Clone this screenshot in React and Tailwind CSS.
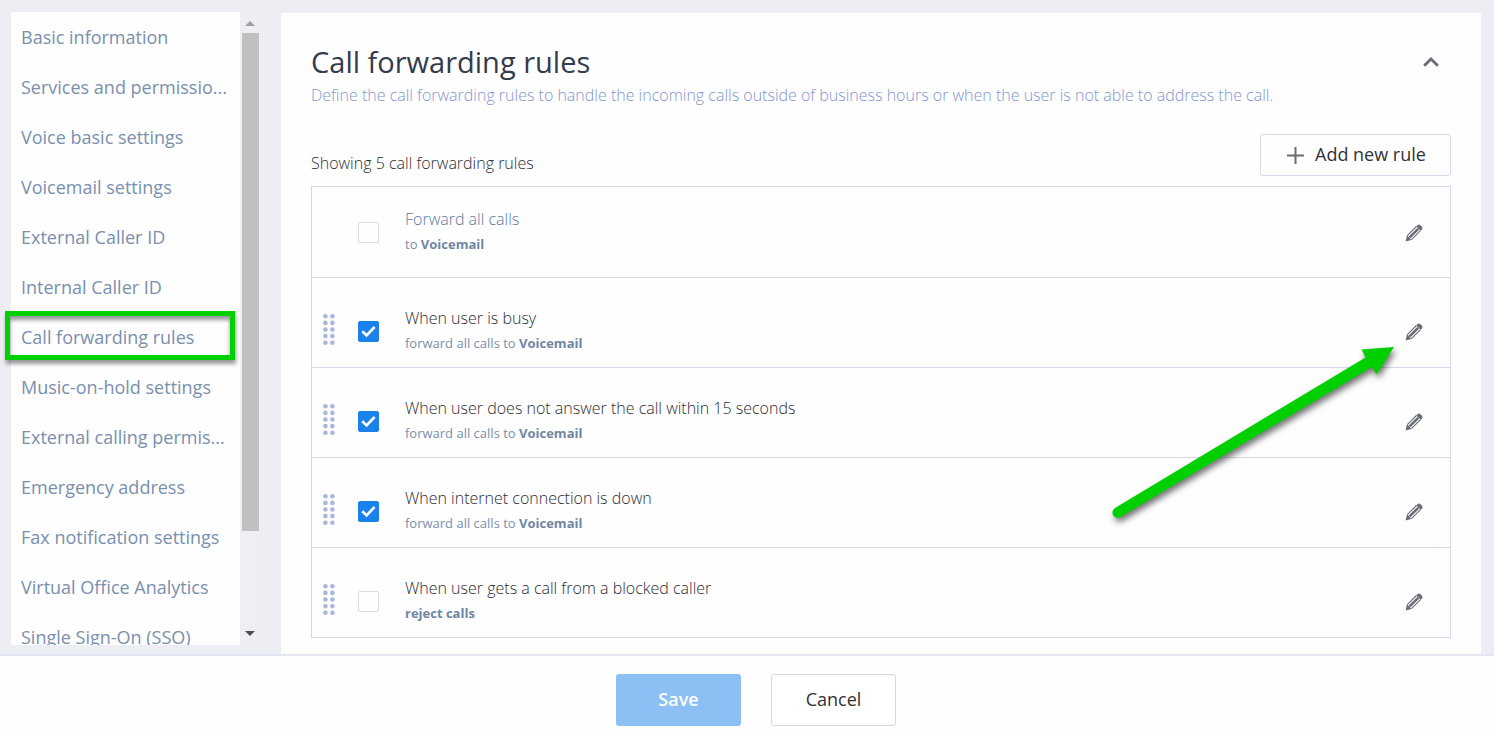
const sections = [
  "Basic information",
  "Services and permissio...",
  "Voice basic settings",
  "Voicemail settings",
  "External Caller ID",
  "Internal Caller ID",
  "Call forwarding rules",
  "Music-on-hold settings",
  "External calling permis...",
  "Emergency address",
  "Fax notification settings",
  "Virtual Office Analytics",
  "Single Sign-On (SSO)",
];

const rules = [
  { id: "all", title: "Forward all calls", action: "to ", target: "Voicemail", enabled: false, fixed: true },
  { id: "busy", title: "When user is busy", action: "forward all calls to ", target: "Voicemail", enabled: true },
  { id: "no-answer", title: "When user does not answer the call within 15 seconds", action: "forward all calls to ", target: "Voicemail", enabled: true },
  { id: "offline", title: "When internet connection is down", action: "forward all calls to ", target: "Voicemail", enabled: true },
  { id: "blocked", title: "When user gets a call from a blocked caller", action: "", target: "reject calls", enabled: false },
];

function PencilIcon() {
  return (
    <svg viewBox="0 0 18 18" className="size-[18px]" fill="none" stroke="#6a6d77" aria-hidden="true">
      <path d="M2.3 11.6 11.4 2.5M6.4 15.7 15.5 6.6" strokeWidth="1.1" />
      <path d="M4.6 13.4 13.2 4.8" strokeWidth="2.6" />
      <path d="M11.2 2.4 12.6 1Q14 0 15.2 1L17 2.8Q18 4 17 5.4L15.6 6.8Z" fill="#6a6d77" stroke="none" />
      <path d="M1.9 11.6 .6 17.4 6.4 16.1 5.4 14.7 4.4 13.6 3.3 12.6Z" fill="#6a6d77" stroke="none" />
    </svg>
  );
}

function DragHandle() {
  return (
    <svg viewBox="0 0 12 31" className="h-[31px] w-3" fill="#a9b7de" aria-hidden="true">
      {[2.3, 8.9, 15.5, 22.1, 28.7].map((y) => (
        <g key={y}>
          <circle cx="2.4" cy={y} r="2.3" />
          <circle cx="9.4" cy={y} r="2.3" />
        </g>
      ))}
    </svg>
  );
}

function Rule({ rule }) {
  return (
    <li
      className={`flex items-center border-b border-[#d3d9ea] last:h-[89px] last:border-b-0 ${rule.fixed ? "h-[91px] pt-px" : "h-[90px] pt-[18px]"}`}
    >
      <div className="flex w-[46px] shrink-0 pl-[11px]">
        {!rule.fixed && (
          <button type="button" aria-label={`Reorder ${rule.title}`} className="-mt-1 cursor-grab">
            <DragHandle />
          </button>
        )}
      </div>
      <div className="grid shrink-0">
        <input
          id={rule.id}
          type="checkbox"
          defaultChecked={rule.enabled}
          className="peer col-start-1 row-start-1 size-[21px] appearance-none rounded-xs border border-[#d5daec] bg-white checked:border-[#1a82ea] checked:bg-[#1a82ea]"
        />
        <svg
          viewBox="0 0 21 21"
          className="pointer-events-none invisible col-start-1 row-start-1 size-[21px] peer-checked:visible"
          fill="none"
          stroke="white"
          strokeWidth="2.6"
          aria-hidden="true"
        >
          <path d="M4.3 10.2 8.6 14.4 16.6 6" />
        </svg>
      </div>
      <div className="min-w-0 flex-1 pb-px pl-[26px]">
        <label
          htmlFor={rule.id}
          className={`block text-base leading-6 font-light ${rule.fixed ? "text-[#5b7aa5]" : "text-[#2b2d35]"}`}
        >
          {rule.title}
        </label>
        <p className="text-[13px] leading-[26px] text-[#7990ae]">
          {rule.action}
          <b className="font-bold text-[#6f86a5]">{rule.target}</b>
        </p>
      </div>
      <button type="button" aria-label={`Edit ${rule.title}`} className="mr-[27px]">
        <PencilIcon />
      </button>
    </li>
  );
}

function Sidebar() {
  return (
    <aside className="flex w-[260px] shrink-0 self-stretch overflow-hidden pl-[11px]">
      <nav className="min-w-0 flex-1 bg-[#fefefe]">
        <ul>
          {sections.map((name) => (
            <li key={name} className="relative">
              <a
                href="#"
                className="block h-[50px] pl-2.5 text-lg leading-[50px] whitespace-nowrap text-[#7990ae]"
              >
                {name}
              </a>
              {name === "Call forwarding rules" && (
                <span className="pointer-events-none absolute -top-px -left-1.5 h-[49px] w-[230px] border-5 border-[#00d000] shadow-[1px_4px_4px_rgba(0,0,0,0.4),inset_0_4px_4px_rgba(0,0,0,0.4)]" />
              )}
            </li>
          ))}
        </ul>
      </nav>
      <div className="flex w-5 flex-col items-center bg-[#f0eef3]" aria-hidden="true">
        <svg viewBox="0 0 10 5" className="mt-[9px] mb-[7px] h-[5px] w-2.5 shrink-0" fill="#a09ea1">
          <path d="M0 5 5 0 10 5Z" />
        </svg>
        <div className="flex w-full flex-1 flex-col items-center">
          <div className="h-5/6 w-[17px] bg-[#c2bfc2]" />
        </div>
        <svg viewBox="0 0 10 5" className="mb-[9px] h-[5px] w-2.5 shrink-0" fill="#4e4c50">
          <path d="M0 0 5 5 10 0Z" />
        </svg>
      </div>
    </aside>
  );
}

function Arrow() {
  return (
    <svg
      viewBox="0 0 300 190"
      className="pointer-events-none absolute top-[154px] right-[46px] h-[190px] w-[300px] drop-shadow-[2px_4px_3px_rgba(0,0,0,0.55)]"
      fill="#00d000"
      aria-hidden="true"
    >
      <path d="M289 7 256.5 9.5 260.5 17.5 10 168A5.2 5.2 0 0 0 15.5 177L267 27 271.5 34.5Z" />
    </svg>
  );
}

export default function App() {
  return (
    <div className="flex h-screen flex-col bg-[#edeef4] font-['Open_Sans',sans-serif]">
      <div className="flex min-h-0 flex-1 gap-[21px] pr-[13px]">
        <div className="flex pt-3 pb-[9px]">
          <Sidebar />
        </div>
        <main className="min-w-0 flex-1 overflow-hidden pt-[13px]">
          <section className="min-h-full bg-[#fefefe] px-[30px] pt-[29px] pb-4">
            <header className="flex items-start justify-between">
              <div>
                <h1 className="text-[29px] leading-10 text-[#343b4c]">Call forwarding rules</h1>
                <p className="text-base leading-[26px] font-light text-[#8296cf]">
                  Define the call forwarding rules to handle the incoming calls outside of business hours or when the
                  user is not able to address the call.
                </p>
              </div>
              <button type="button" aria-label="Collapse section" className="mt-3.5 mr-3">
                <svg viewBox="0 0 16 12" className="h-3 w-4" fill="none" stroke="#696b75" strokeWidth="2.8" aria-hidden="true">
                  <path d="M1.2 9.8 8 3 14.8 9.8" />
                </svg>
              </button>
            </header>
            <div className="mt-[26px] flex items-center justify-between">
              <p className="pt-4 text-base leading-6 font-light text-[#2b2d35]">Showing 5 call forwarding rules</p>
              <button
                type="button"
                className="flex h-[42px] w-[191px] items-center gap-[11px] rounded-[3px] border border-[#d3d9ea] pb-0.5 pl-[26px] text-lg whitespace-nowrap text-[#303238]"
              >
                <svg viewBox="0 0 17 17" className="mt-0.5 size-[17px]" stroke="#696b75" strokeWidth="2" aria-hidden="true">
                  <path d="M8.5 0V17M0 8.5H17" />
                </svg>
                Add new rule
              </button>
            </div>
            <div className="relative mt-2.5">
              <ul className="border border-[#d3d9ea]">
                {rules.map((rule) => (
                  <Rule key={rule.id} rule={rule} />
                ))}
              </ul>
              <Arrow />
            </div>
          </section>
        </main>
      </div>
      <footer className="flex h-[81px] shrink-0 items-start justify-center gap-[30px] border-t-2 border-[#e4e7f1] bg-[#fefefe] pt-[18px] pl-[18px]">
        <button type="button" className="h-[52px] w-[125px] rounded-[3px] bg-[#8cc0f5] pb-0.5 text-lg font-semibold text-white">
          Save
        </button>
        <button type="button" className="h-[52px] w-[125px] rounded-[3px] border border-[#d3d9ea] bg-white pb-0.5 text-lg text-[#303238]">
          Cancel
        </button>
      </footer>
    </div>
  );
}
